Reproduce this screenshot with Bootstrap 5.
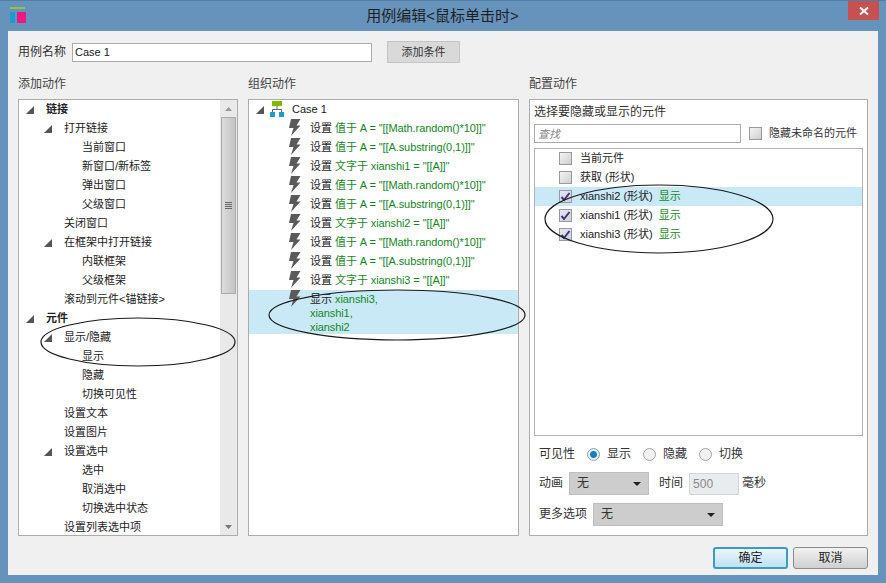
<!DOCTYPE html>
<html lang="zh-CN">
<head>
<meta charset="utf-8">
<title>用例编辑</title>
<link href="https://cdn.jsdelivr.net/npm/bootstrap@5.3.0/dist/css/bootstrap.min.css" rel="stylesheet">
<style>
html,body{margin:0;height:583px;overflow:hidden;background:#6593bb}
body{font:11px/19px "Liberation Sans","Noto Sans CJK SC",sans-serif;color:#222}
.win{position:relative;width:886px;height:583px;background:#6593bb;border-top:1px solid #4f7ea8}
.titlebar{height:30px}
.app-ic{margin:5px 0 0 10px;flex:none}
.wintitle{flex:1;text-align:center;font-size:15px;line-height:29px;color:#1f1f1f;margin-right:-10px}
.closex{width:31px;height:19px;margin-right:7px;background:#c75050;flex:none}
.client{margin:0 8px;height:544px;background:#f0f0f0;padding:10px 10px 0;display:flex;flex-direction:column}
.namerow{height:22px;font-size:12px}
.namerow .lbl{width:54px;color:#333}
.name-in{width:300px;height:19px;min-height:0;padding:0 2px;border:1px solid #acacac;border-radius:0;font:11px/17px "Liberation Sans",sans-serif;color:#222;background:#fff}
.addc{width:73px;height:22px;margin-left:15px;padding:0;border:1px solid #c4c4c4;border-radius:0;background:#d9d9d9;font-size:11px;line-height:20px;color:#333}
.cols{margin-top:12px;height:461px}
.col1{width:220px}.col2{width:271px;margin-left:10px}.col3{width:339px;margin-left:10px}
.head{height:24px;font-size:12px;line-height:18px;color:#444}
.panel-box{height:437px;background:#fff;border:1px solid #acacac;overflow:hidden}
.trow{height:19px;line-height:19px;white-space:nowrap}
.l0{padding-left:7px}.l1{padding-left:25px}.l2{padding-left:43px}
.slot{width:20px;flex:none;display:flex;align-items:center}
.slot-case{width:14px}
.boldt{font-weight:700}
.tree{flex:1;overflow:hidden;min-width:0}
.sbar{width:17px;flex:none;background:#e9e9e9;display:flex;flex-direction:column;align-items:center}
.sb-arrow{height:17px;flex:none;display:flex;align-items:center;justify-content:center}
.thumb{width:15px;height:177px;flex:none;background:linear-gradient(90deg,#dcdcdc,#c4c4c4);border:1px solid #ababab;display:flex;align-items:center;justify-content:center}
.grip{width:7px;height:7px;background:repeating-linear-gradient(#666 0 1px,transparent 1px 2px)}
.sb-fill{flex:1}
.acts{padding-left:40px}
.act{height:19px;white-space:nowrap}
.bolt{flex:none;width:12px;margin-right:9px;margin-top:-2px}
.grn{color:#118a1a;letter-spacing:-.09px}
.sel-block{background:#c9e9f6;height:44px;padding:2px 0 0 40px;line-height:14px;white-space:nowrap}
.sel-block .bolt{margin-top:-2px;align-self:flex-start}
.case-ic{width:14px;margin-right:8px;flex:none}
.ptop{padding:2px 4px 0;height:48px}
.ptitle{font-size:12px;line-height:20px;height:22px;color:#333}
.search{width:207px;height:19px;padding:0 3px;border:1px solid #acacac;border-radius:0;font:italic 11px/17px "Liberation Sans","Noto Sans CJK SC",sans-serif;color:#222}
.search::placeholder{color:#888}
.cbx{width:13px;height:13px;flex:none;border:1px solid #9a9a9a;background:linear-gradient(135deg,#f4f4f4,#cfcfcf);display:flex;align-items:center;justify-content:center}
.cbx.on{background:linear-gradient(135deg,#e6e6f2,#cfcfe0)}
.hide-lbl{margin-left:7px;color:#333}
.elist{margin:0 4px;height:288px;border:1px solid #b2b2b2;background:#fff}
.erow{height:19px;padding-left:24px;white-space:nowrap}
.erow .cbx{margin-right:8px}
.erow.hl{background:#c9e9f6}
.pbot{padding:0 0 0 9px;font-size:12px;color:#333}
.vis-row{height:27px;margin-top:5px}
.rad{width:13px;height:13px;flex:none;border-radius:50%;border:1px solid #a5a5a5;background:#f2f2f2;margin:0 7px 0 12px}
.rad.on{background:radial-gradient(circle,#1d7db8 0 3px,#e8f4fb 4px);border-color:#7da2ba}
.fakesel{height:23px;background:#cdcdcd;border:1px solid #bfbfbf;padding:0 7px;line-height:21px;flex:none;display:flex;align-items:center;justify-content:space-between;margin-left:6px}
.fs1{width:80px;margin-right:10px}.fs2{width:130px}
.tinput{width:50px;height:22px;padding:0 3px;border:1px solid #d4d4d4;border-radius:0;background:#f0f0f0;font:12px/20px "Liberation Sans",sans-serif;color:#888;margin:0 3px 0 6px}
.anim-row{height:23px;margin-top:4px}
.more-row{height:23px;margin-top:8px}
.foot{height:22px;margin-top:11px;gap:5px}
.fbtn{width:75px;height:22px;padding:0;border:1px solid #8c8c8c;border-radius:3px;background:linear-gradient(#f2f2f2,#cfcfcf);font-size:12px;line-height:20px;color:#222}
.fbtn.def{border:2px solid #3c9ac3;line-height:18px;background:linear-gradient(#eaf6fc,#bfe1f3)}
.notes{position:absolute;left:0;top:-1px;pointer-events:none}
</style>
</head>
<body>
<div class="win">
  <div class="titlebar d-flex">
    <svg class="app-ic" width="17" height="18" viewBox="0 0 17 18"><rect y="1" width="15" height="2" fill="#8cc63f"/><rect y="6" width="5" height="11" fill="#1b9ad6"/><rect x="7" y="6" width="9" height="11" fill="#ea1a80"/></svg>
    <div class="wintitle">用例编辑&lt;鼠标单击时&gt;</div>
    <div class="closex d-flex align-items-center justify-content-center"><svg width="10" height="8" viewBox="0 0 10 8"><path d="M1 0.5 9 7.5M9 .5 1 7.5" stroke="#fff" stroke-width="2"/></svg></div>
  </div>
  <div class="client">
    <div class="namerow d-flex align-items-center">
      <span class="lbl">用例名称</span>
      <input class="form-control name-in" value="Case 1">
      <button type="button" class="btn addc">添加条件</button>
    </div>
    <div class="cols d-flex">
      <div class="col1">
        <div class="head">添加动作</div>
        <div class="panel-box d-flex">
          <div class="tree">
            <div class="trow l0 d-flex"><span class="slot"><svg width="8" height="8"><path d="M8 0V8H0Z" fill="#555"/></svg></span><span class="boldt">链接</span></div>
            <div class="trow l1 d-flex"><span class="slot"><svg width="8" height="8"><path d="M8 0V8H0Z" fill="#555"/></svg></span>打开链接</div>
            <div class="trow l2 d-flex"><span class="slot"></span>当前窗口</div>
            <div class="trow l2 d-flex"><span class="slot"></span>新窗口/新标签</div>
            <div class="trow l2 d-flex"><span class="slot"></span>弹出窗口</div>
            <div class="trow l2 d-flex"><span class="slot"></span>父级窗口</div>
            <div class="trow l1 d-flex"><span class="slot"></span>关闭窗口</div>
            <div class="trow l1 d-flex"><span class="slot"><svg width="8" height="8"><path d="M8 0V8H0Z" fill="#555"/></svg></span>在框架中打开链接</div>
            <div class="trow l2 d-flex"><span class="slot"></span>内联框架</div>
            <div class="trow l2 d-flex"><span class="slot"></span>父级框架</div>
            <div class="trow l1 d-flex"><span class="slot"></span>滚动到元件&lt;锚链接&gt;</div>
            <div class="trow l0 d-flex"><span class="slot"><svg width="8" height="8"><path d="M8 0V8H0Z" fill="#555"/></svg></span><span class="boldt">元件</span></div>
            <div class="trow l1 d-flex"><span class="slot"><svg width="8" height="8"><path d="M8 0V8H0Z" fill="#555"/></svg></span>显示/隐藏</div>
            <div class="trow l2 d-flex"><span class="slot"></span>显示</div>
            <div class="trow l2 d-flex"><span class="slot"></span>隐藏</div>
            <div class="trow l2 d-flex"><span class="slot"></span>切换可见性</div>
            <div class="trow l1 d-flex"><span class="slot"></span>设置文本</div>
            <div class="trow l1 d-flex"><span class="slot"></span>设置图片</div>
            <div class="trow l1 d-flex"><span class="slot"><svg width="8" height="8"><path d="M8 0V8H0Z" fill="#555"/></svg></span>设置选中</div>
            <div class="trow l2 d-flex"><span class="slot"></span>选中</div>
            <div class="trow l2 d-flex"><span class="slot"></span>取消选中</div>
            <div class="trow l2 d-flex"><span class="slot"></span>切换选中状态</div>
            <div class="trow l1 d-flex"><span class="slot"></span>设置列表选中项</div>
          </div>
          <div class="sbar">
            <div class="sb-arrow"><svg width="7" height="4"><path d="M3.500 0 7 4H0Z" fill="#9a9a9a"/></svg></div>
            <div class="thumb"><div class="grip"></div></div>
            <div class="sb-fill"></div>
            <div class="sb-arrow"><svg width="7" height="4"><path d="M0 0H7L3.500 4Z" fill="#777"/></svg></div>
          </div>
        </div>
      </div>
      <div class="col2">
        <div class="head">组织动作</div>
        <div class="panel-box">
          <div class="trow l0 d-flex"><span class="slot slot-case"><svg width="8" height="8"><path d="M8 0V8H0Z" fill="#555"/></svg></span>
            <svg class="case-ic" width="14" height="19" viewBox="0 0 14 19"><rect x="2" y="1" width="10" height="5" fill="#7fba00"/><path d="M7 6V9M2.500 12V9.500H11.500V12" fill="none" stroke="#666"/><rect y="12" width="5" height="5" fill="#1e9bd1"/><rect x="9" y="12" width="5" height="5" fill="#1e9bd1"/></svg>
            Case 1</div>
          <div class="acts">
            <div class="act d-flex align-items-center"><svg class="bolt" width="12" height="17" viewBox="0 0 12 17"><path d="M2 0H11.500L7.500 6.500H11.500L2 17 4.500 9H0Z" fill="#5a5a5a"/></svg><span>设置 <span class="grn">值于 A = "[[Math.random()*10]]"</span></span></div>
            <div class="act d-flex align-items-center"><svg class="bolt" width="12" height="17" viewBox="0 0 12 17"><path d="M2 0H11.500L7.500 6.500H11.500L2 17 4.500 9H0Z" fill="#5a5a5a"/></svg><span>设置 <span class="grn">值于 A = "[[A.substring(0,1)]]"</span></span></div>
            <div class="act d-flex align-items-center"><svg class="bolt" width="12" height="17" viewBox="0 0 12 17"><path d="M2 0H11.500L7.500 6.500H11.500L2 17 4.500 9H0Z" fill="#5a5a5a"/></svg><span>设置 <span class="grn">文字于 xianshi1 = "[[A]]"</span></span></div>
            <div class="act d-flex align-items-center"><svg class="bolt" width="12" height="17" viewBox="0 0 12 17"><path d="M2 0H11.500L7.500 6.500H11.500L2 17 4.500 9H0Z" fill="#5a5a5a"/></svg><span>设置 <span class="grn">值于 A = "[[Math.random()*10]]"</span></span></div>
            <div class="act d-flex align-items-center"><svg class="bolt" width="12" height="17" viewBox="0 0 12 17"><path d="M2 0H11.500L7.500 6.500H11.500L2 17 4.500 9H0Z" fill="#5a5a5a"/></svg><span>设置 <span class="grn">值于 A = "[[A.substring(0,1)]]"</span></span></div>
            <div class="act d-flex align-items-center"><svg class="bolt" width="12" height="17" viewBox="0 0 12 17"><path d="M2 0H11.500L7.500 6.500H11.500L2 17 4.500 9H0Z" fill="#5a5a5a"/></svg><span>设置 <span class="grn">文字于 xianshi2 = "[[A]]"</span></span></div>
            <div class="act d-flex align-items-center"><svg class="bolt" width="12" height="17" viewBox="0 0 12 17"><path d="M2 0H11.500L7.500 6.500H11.500L2 17 4.500 9H0Z" fill="#5a5a5a"/></svg><span>设置 <span class="grn">值于 A = "[[Math.random()*10]]"</span></span></div>
            <div class="act d-flex align-items-center"><svg class="bolt" width="12" height="17" viewBox="0 0 12 17"><path d="M2 0H11.500L7.500 6.500H11.500L2 17 4.500 9H0Z" fill="#5a5a5a"/></svg><span>设置 <span class="grn">值于 A = "[[A.substring(0,1)]]"</span></span></div>
            <div class="act d-flex align-items-center"><svg class="bolt" width="12" height="17" viewBox="0 0 12 17"><path d="M2 0H11.500L7.500 6.500H11.500L2 17 4.500 9H0Z" fill="#5a5a5a"/></svg><span>设置 <span class="grn">文字于 xianshi3 = "[[A]]"</span></span></div>
          </div>
          <div class="sel-block d-flex"><svg class="bolt" width="12" height="17" viewBox="0 0 12 17"><path d="M2 0H11.500L7.500 6.500H11.500L2 17 4.500 9H0Z" fill="#5a5a5a"/></svg><span>显示 <span class="grn">xianshi3,<br>xianshi1,<br>xianshi2</span></span></div>
        </div>
      </div>
      <div class="col3">
        <div class="head">配置动作</div>
        <div class="panel-box">
          <div class="ptop">
            <div class="ptitle">选择要隐藏或显示的元件</div>
            <div class="d-flex align-items-center">
              <input class="form-control search" placeholder="查找">
              <span class="cbx ms-2"></span><span class="hide-lbl">隐藏未命名的元件</span>
            </div>
          </div>
          <div class="elist">
            <div class="erow d-flex align-items-center"><span class="cbx"></span>当前元件</div>
            <div class="erow d-flex align-items-center"><span class="cbx"></span>获取 (形状)</div>
            <div class="erow hl d-flex align-items-center"><span class="cbx on"><svg width="11" height="10" viewBox="0 0 11 10"><path d="M1.500 5 4 8 9.500 1" fill="none" stroke="#3b3a78" stroke-width="2"/></svg></span><span>xianshi2 (形状) &nbsp;<span class="grn">显示</span></span></div>
            <div class="erow d-flex align-items-center"><span class="cbx on"><svg width="11" height="10" viewBox="0 0 11 10"><path d="M1.500 5 4 8 9.500 1" fill="none" stroke="#3b3a78" stroke-width="2"/></svg></span><span>xianshi1 (形状) &nbsp;<span class="grn">显示</span></span></div>
            <div class="erow d-flex align-items-center"><span class="cbx on"><svg width="11" height="10" viewBox="0 0 11 10"><path d="M1.500 5 4 8 9.500 1" fill="none" stroke="#3b3a78" stroke-width="2"/></svg></span><span>xianshi3 (形状) &nbsp;<span class="grn">显示</span></span></div>
          </div>
          <div class="pbot">
            <div class="vis-row d-flex align-items-center"><span>可见性</span>
              <span class="rad on"></span><span>显示</span>
              <span class="rad"></span><span>隐藏</span>
              <span class="rad"></span><span>切换</span></div>
            <div class="anim-row d-flex align-items-center"><span>动画</span>
              <div class="fakesel fs1"><span>无</span><svg width="8" height="4"><path d="M0 0H8L4 4Z" fill="#222"/></svg></div>
              <span>时间</span><input class="form-control tinput" value="500" disabled><span>毫秒</span></div>
            <div class="more-row d-flex align-items-center"><span>更多选项</span>
              <div class="fakesel fs2"><span>无</span><svg width="8" height="4"><path d="M0 0H8L4 4Z" fill="#222"/></svg></div></div>
          </div>
        </div>
      </div>
    </div>
    <div class="foot d-flex justify-content-end">
      <button type="button" class="btn fbtn def">确定</button>
      <button type="button" class="btn fbtn">取消</button>
    </div>
  </div>
  <svg class="notes" width="886" height="583" fill="none" stroke="#1a1a1a" stroke-width="1.200">
    <ellipse cx="138" cy="342" rx="97" ry="24"/>
    <ellipse cx="397" cy="315" rx="128" ry="25"/>
    <ellipse cx="659" cy="219" rx="114" ry="34"/>
  </svg>
</div>
</body>
</html>
